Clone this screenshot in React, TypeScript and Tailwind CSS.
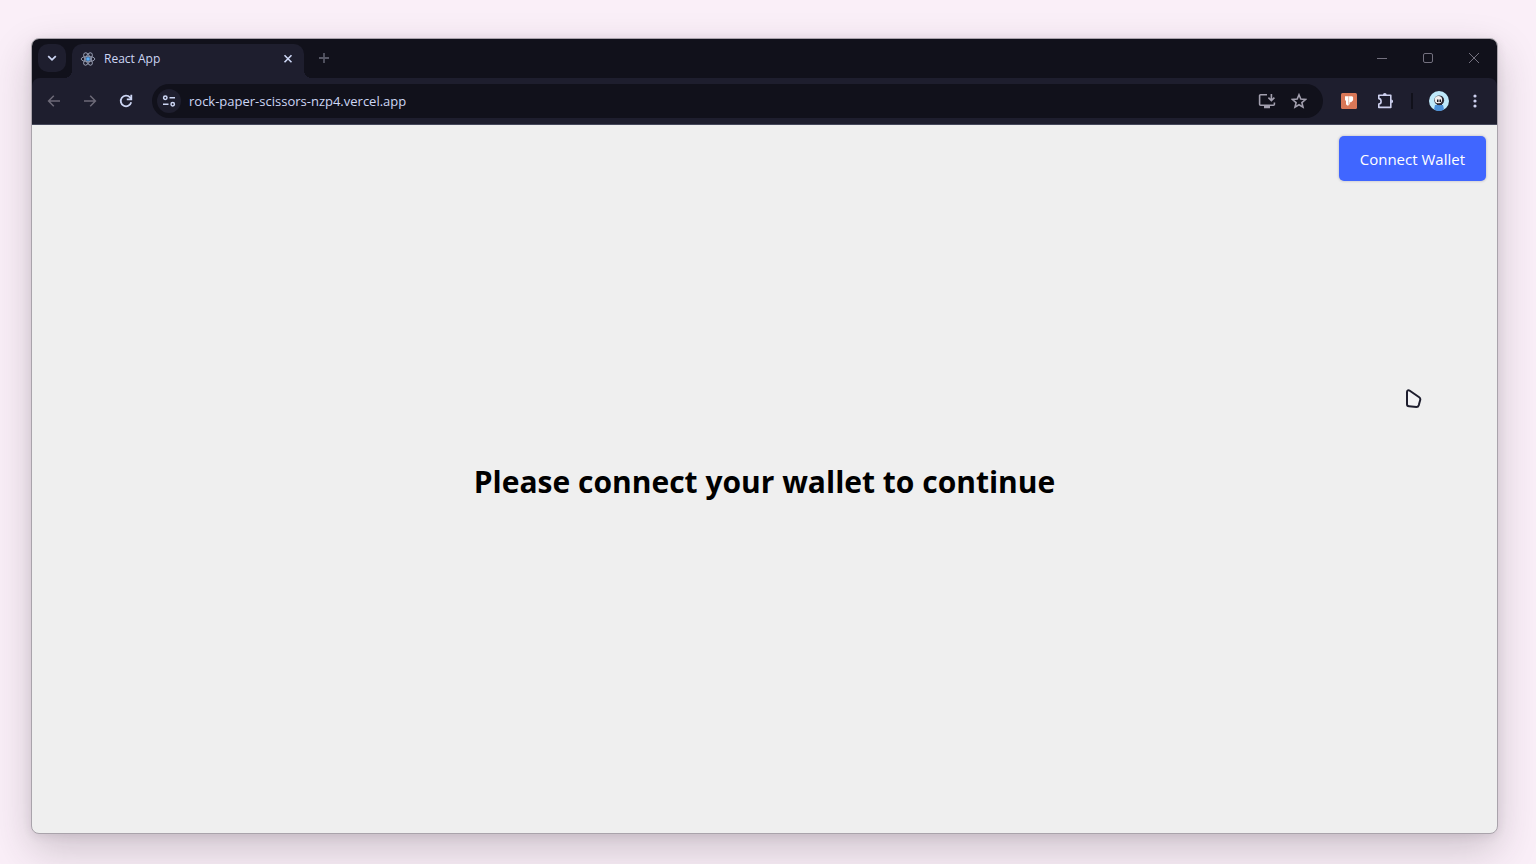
import type { ReactNode } from "react";

function IconButton({ label, className = "", children }: { label: string; className?: string; children: ReactNode }) {
  return (
    <button type="button" aria-label={label} className={`flex shrink-0 items-center justify-center ${className}`}>
      {children}
    </button>
  );
}

function ReactLogo() {
  return (
    <svg width="16" height="16" viewBox="0 0 16 16" fill="none" stroke="#9298ac" strokeWidth="1" aria-hidden="true">
      <ellipse cx="8" cy="8" rx="6.8" ry="2.7" />
      <ellipse cx="8" cy="8" rx="6.8" ry="2.7" transform="rotate(60 8 8)" />
      <ellipse cx="8" cy="8" rx="6.8" ry="2.7" transform="rotate(120 8 8)" />
      <circle cx="8" cy="8" r="1.8" fill="#5cb0f5" stroke="#4b8fd0" />
    </svg>
  );
}

function TabStrip() {
  return (
    <div className="flex h-[39px] items-end bg-[#11111b]">
      <IconButton label="Search tabs" className="mb-[6px] ml-[6px] size-7 rounded-[10px] bg-[#1e1e2e]">
        <svg width="12" height="12" viewBox="0 0 12 12" fill="none" stroke="#cdd6f4" strokeWidth="1.8">
          <path d="M2.2 4.2 6 7.8l3.8-3.6" />
        </svg>
      </IconButton>
      <div className="relative ml-[6px] flex h-[34px] w-[232px] items-center rounded-t-[10px] bg-[#1e1e2e] pr-[6px] pb-[5px] pl-2">
        <span className="absolute bottom-0 -left-2 size-2 bg-[radial-gradient(circle_at_0_0,transparent_8px,#1e1e2e_8px)]" />
        <span className="absolute -right-2 bottom-0 size-2 bg-[radial-gradient(circle_at_100%_0,transparent_8px,#1e1e2e_8px)]" />
        <ReactLogo />
        <span className="ml-2 flex-1 text-[12px] leading-4 text-[#cdd6f4]">React App</span>
        <IconButton label="Close tab" className="size-5">
          <svg width="10" height="10" viewBox="0 0 10 10" stroke="#cdd6f4" strokeWidth="1.6">
            <path d="m1.5 1.2 7 7M8.5 1.2l-7 7" />
          </svg>
        </IconButton>
      </div>
      <IconButton label="New tab" className="mb-[6px] ml-[6px] size-7">
        <svg width="12" height="12" viewBox="0 0 12 12" stroke="#565765" strokeWidth="1.8">
          <path d="M6 1v10M1 6h10" />
        </svg>
      </IconButton>
      <div className="ml-auto flex h-full pb-px text-[#74717f]">
        <IconButton label="Minimize" className="w-[46px]">
          <svg width="12" height="12" viewBox="0 0 12 12" stroke="currentColor">
            <path d="M1 6.5h10" />
          </svg>
        </IconButton>
        <IconButton label="Maximize" className="w-[46px]">
          <svg width="12" height="12" viewBox="0 0 12 12" fill="none" stroke="currentColor">
            <rect x="1.5" y="1.5" width="9" height="9" rx="1.5" />
          </svg>
        </IconButton>
        <IconButton label="Close window" className="w-[46px]">
          <svg width="12" height="12" viewBox="0 0 12 12" stroke="currentColor">
            <path d="m1 1 10 10M11 1 1 11" />
          </svg>
        </IconButton>
      </div>
    </div>
  );
}

function Toolbar() {
  return (
    <div className="bg-[#11111b]">
      <div className="flex h-[47px] items-center rounded-t-lg border-b border-[#45475a] bg-[#1e1e2e] px-1">
        <IconButton label="Back" className="size-9 text-[#6d6a78]">
          <svg width="14" height="14" viewBox="0 0 14 14" fill="none" stroke="currentColor" strokeWidth="1.5">
            <path d="M13 7H1.8M6.8 1.8 1.6 7l5.2 5.2" />
          </svg>
        </IconButton>
        <IconButton label="Forward" className="size-9 text-[#6d6a78]">
          <svg width="14" height="14" viewBox="0 0 14 14" fill="none" stroke="currentColor" strokeWidth="1.5">
            <path d="M1 7h11.2M7.2 1.8 12.4 7l-5.2 5.2" />
          </svg>
        </IconButton>
        <IconButton label="Reload" className="size-9">
          <svg width="14" height="14" viewBox="0 0 14 14" fill="none" stroke="#cdd6f4" strokeWidth="1.8">
            <path d="M12.2 8.3A5.3 5.3 0 1 1 11 3.4l1.2 1.4" />
            <path d="M12.3 0.8v4.6H7.8" />
          </svg>
        </IconButton>
        <div className="ml-2 flex h-[34px] min-w-0 flex-1 items-center rounded-full bg-[#11111b] pr-2 pl-[5px]">
          <IconButton label="View site information" className="size-6 rounded-full bg-[#1e1e2e]">
            <svg width="14" height="12" viewBox="0 0 14 12" fill="none" stroke="#cdd6f4" strokeWidth="1.5">
              <circle cx="3.3" cy="2.8" r="1.7" />
              <path d="M7.5 2.8H13M1 9.2h5.5" />
              <circle cx="10.7" cy="9.2" r="1.7" />
            </svg>
          </IconButton>
          <input
            type="text"
            aria-label="Address"
            defaultValue="rock-paper-scissors-nzp4.vercel.app"
            className="ml-2 min-w-0 flex-1 bg-transparent text-[13px] leading-5 text-[#cdd6f4] outline-none"
          />
          <IconButton label="Install app" className="size-8">
            <svg width="18" height="16" viewBox="0 0 18 16" fill="none" stroke="#a29fae" strokeWidth="1.6">
              <path d="M9 1.8H2.6a1 1 0 0 0-1 1v8.4a1 1 0 0 0 1 1h12.8a1 1 0 0 0 1-1V9.4" />
              <path d="M13.4 1v6M10.4 4.6l3 3 3-3" />
              <path d="M6 14h6" strokeWidth="2.4" />
            </svg>
          </IconButton>
          <IconButton label="Bookmark this tab" className="size-8">
            <svg width="16" height="16" viewBox="0 0 16 16" fill="none" stroke="#a29fae" strokeWidth="1.6">
              <path d="m8 1.8 1.8 4.3 4.7.4-3.6 3.1 1.1 4.6L8 11.8l-4 2.4 1.1-4.6-3.6-3.1 4.7-.4z" />
            </svg>
          </IconButton>
        </div>
        <IconButton label="Extension" className="ml-2 size-9">
          <svg width="16" height="16" viewBox="0 0 16 16">
            <rect width="16" height="16" rx="1.5" fill="#d97757" />
            <path d="M4 3.3h3.4v9.2H6.2L5 11.2V8L4 7z" fill="#fff" />
            <path d="M7.4 3.3h3.8l.9 1v3l-2 2H8.700v1.800l-1.300 1.400z" fill="#fff" />
            <path d="M7.700 3.300v7.700" stroke="#e9b09c" strokeWidth="0.6" />
          </svg>
        </IconButton>
        <IconButton label="Extensions" className="size-9">
          <svg width="18" height="18" viewBox="0 0 18 18" fill="none" stroke="#cdd0ee" strokeWidth="1.6">
            <path d="M2.8 3.2h12v12.2h-12v-3.3c1.5-.2 2.300-1.300 2.300-2.700S4.300 6.800 2.800 6.600z" strokeLinejoin="round" />
            <path d="M6.900 3a1.900 1.900 0 0 1 3.800 0zM15.200 7.400a1.900 1.900 0 0 1 0 3.800z" fill="#cdd0ee" stroke="none" />
          </svg>
        </IconButton>
        <span className="mx-2 h-4 w-[2px] bg-[#11111b]" />
        <IconButton label="Profile" className="size-9">
          <svg width="20" height="20" viewBox="0 0 20 20">
            <circle cx="10" cy="10" r="10" fill="#bfe9fb" />
            <path d="M5 18.6 6 14h8l1 4.6A10 10 0 0 1 5 18.6z" fill="#4a90d9" />
            <ellipse cx="10.200" cy="9.300" rx="4.900" ry="4.900" fill="#2a2732" />
            <ellipse cx="9.400" cy="8.800" rx="3.700" ry="3.700" fill="#f1eeee" />
            <path d="M8 8.500h1.500v2.500H8zM10.500 8.500H12v2.500h-1.500z" fill="#17151d" />
            <path d="M8 12.500h5v1.500H8z" fill="#2a2732" />
          </svg>
        </IconButton>
        <IconButton label="Browser menu" className="size-9">
          <svg width="4" height="14" viewBox="0 0 4 14" fill="#cdd0ee">
            <circle cx="2" cy="2" r="1.6" />
            <circle cx="2" cy="7" r="1.6" />
            <circle cx="2" cy="12" r="1.6" />
          </svg>
        </IconButton>
      </div>
    </div>
  );
}

export default function App() {
  return (
    <div className="flex min-h-screen flex-col overflow-hidden bg-[#faeff8] pt-[38px] pr-[38px] pb-[30px] pl-[31px] font-['Open_Sans','Noto_Sans',sans-serif]">
      <div className="relative flex flex-1 flex-col overflow-hidden rounded-lg border border-[#a9a3ab] bg-[#efefef] shadow-[0_16px_40px_rgba(50,40,50,0.22),0_2px_10px_rgba(50,40,50,0.10)]">
        <TabStrip />
        <Toolbar />
        <main className="flex flex-1 flex-col">
          <header className="flex justify-end p-[11px]">
            <button
              type="button"
              className="h-[45px] rounded-[5px] bg-[#4066ff] px-[21px] text-[15px] leading-6 text-white shadow-[0_0_2px_1px_rgba(60,50,70,0.14)]"
            >
              Connect Wallet
            </button>
          </header>
          <div className="flex flex-1 items-center justify-center pb-[62px]">
            <h1 className="text-[30px] leading-[44px] font-bold text-black">Please connect your wallet to continue</h1>
          </div>
        </main>
        <svg
          className="absolute top-[350px] right-[74px]"
          width="18"
          height="20"
          viewBox="0 0 18 20"
          fill="#f3f3f5"
          stroke="#1e1e2e"
          strokeWidth="2"
          strokeLinejoin="round"
          aria-hidden="true"
        >
          <path d="M2 3C2 1.200 3.400.700 4.800 1.700l9.400 6.600c1.100.8 1.300 1.600 1 2.700l-1.400 5.100c-.4 1.300-1 1.900-2.300 1.900L4 17.200c-1.300-.1-2-.7-2-2z" />
        </svg>
      </div>
    </div>
  );
}
